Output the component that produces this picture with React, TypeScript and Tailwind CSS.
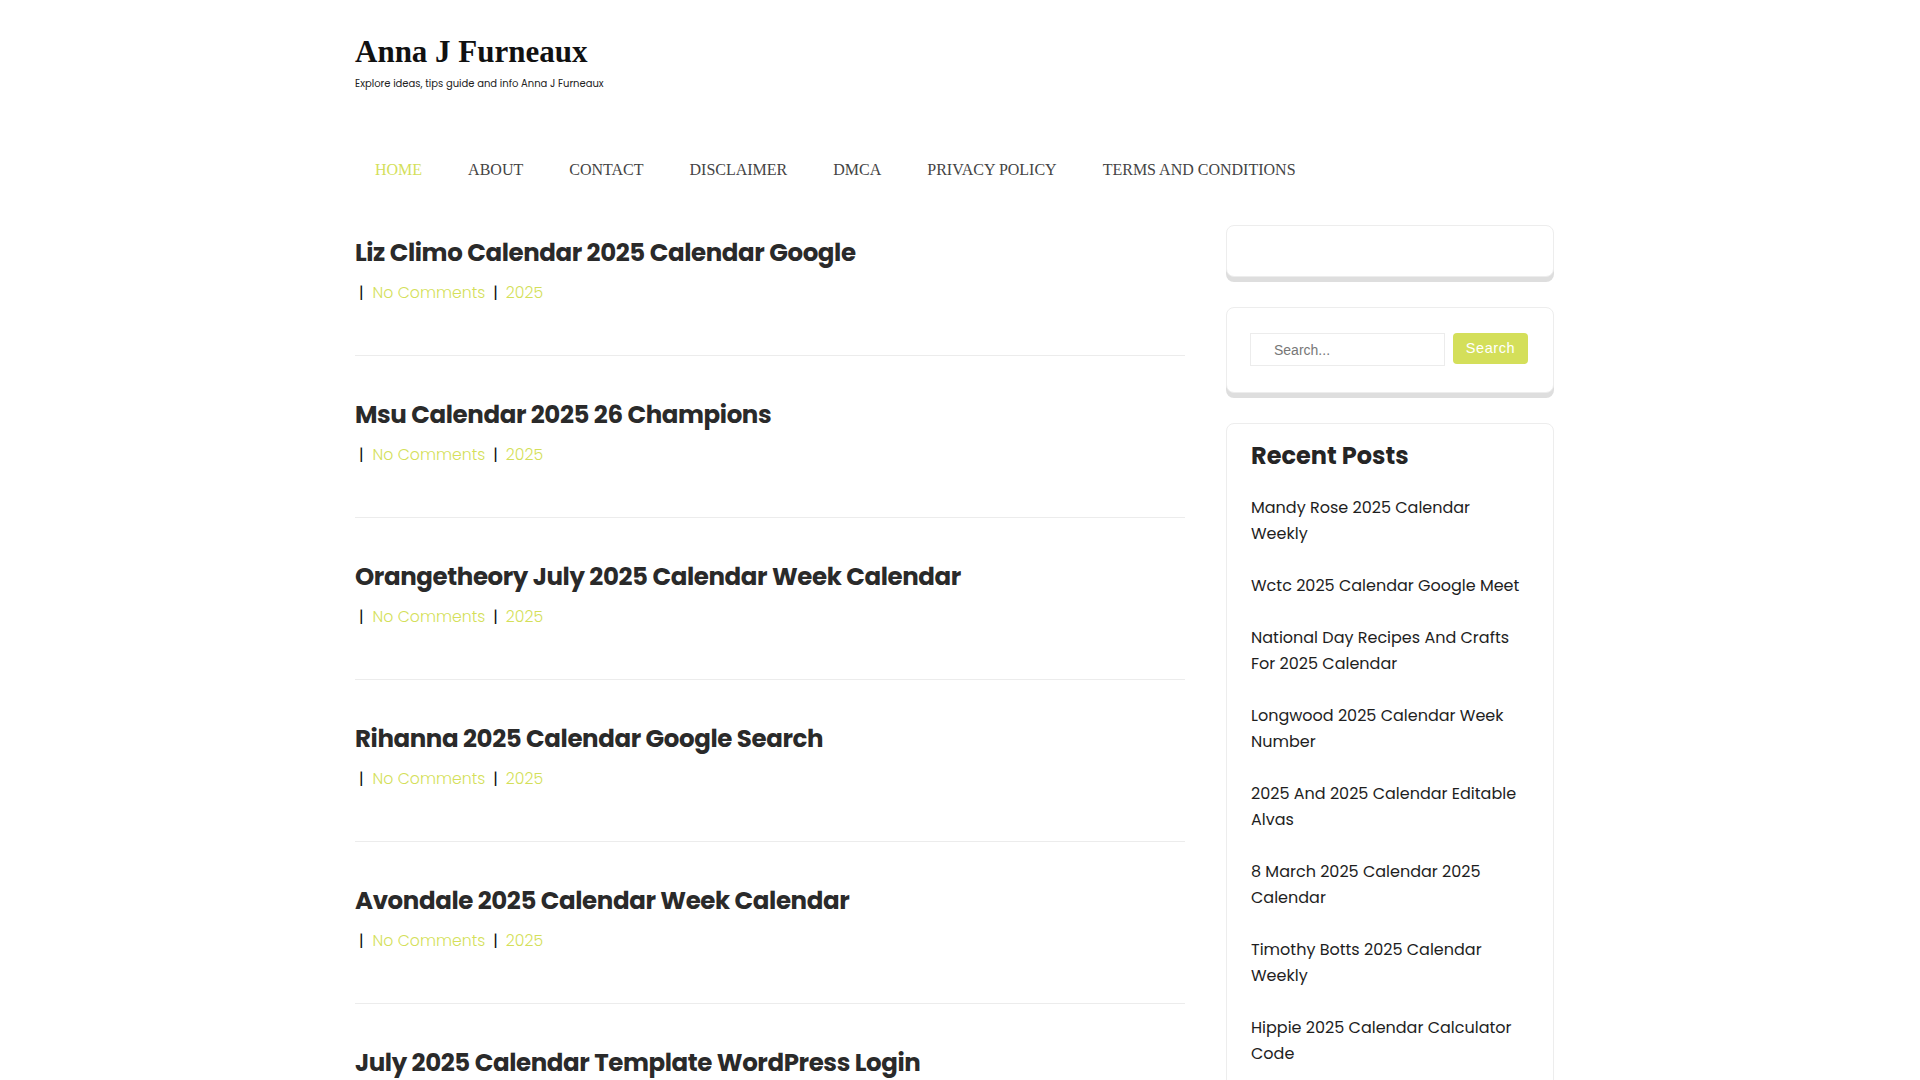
import React from "react";

const posts = [
  "Liz Climo Calendar 2025 Calendar Google",
  "Msu Calendar 2025 26 Champions",
  "Orangetheory July 2025 Calendar Week Calendar",
  "Rihanna 2025 Calendar Google Search",
  "Avondale 2025 Calendar Week Calendar",
  "July 2025 Calendar Template WordPress Login",
];

const recent: string[][] = [
  ["Mandy Rose 2025 Calendar", "Weekly"],
  ["Wctc 2025 Calendar Google Meet"],
  ["National Day Recipes And Crafts", "For 2025 Calendar"],
  ["Longwood 2025 Calendar Week", "Number"],
  ["2025 And 2025 Calendar Editable", "Alvas"],
  ["8 March 2025 Calendar 2025", "Calendar"],
  ["Timothy Botts 2025 Calendar", "Weekly"],
  ["Hippie 2025 Calendar Calculator", "Code"],
];

const nav = [
  "HOME",
  "ABOUT",
  "CONTACT",
  "DISCLAIMER",
  "DMCA",
  "PRIVACY POLICY",
  "TERMS AND CONDITIONS",
];

const sans = "font-['Poppins','Inter',sans-serif]";

function Widget({ children, className = "" }: { children?: React.ReactNode; className?: string }) {
  return (
    <div
      className={`rounded-[8px] border border-[#ededed] bg-white shadow-[0_5px_0_#dedede] ${className}`}
    >
      {children}
    </div>
  );
}

export default function App() {
  return (
    <div className={`min-h-screen bg-white pr-[10px] text-[#222] ${sans}`}>
      <div className="mx-auto w-[1200px]">
        <header className="pt-[33px]">
          <h1 className="font-['Liberation_Serif',serif] text-[31px] font-bold leading-[38px] text-[#111]">
            Anna J Furneaux
          </h1>
          <p className="mt-[5px] text-[10px] leading-[16px] text-[#222]">
            Explore ideas, tips guide and info Anna J Furneaux
          </p>
        </header>

        <nav className="-ml-[3px] mt-[66px] flex font-['Liberation_Serif',serif] text-[16px] leading-[24px]">
          {nav.map((item, i) => (
            <a
              key={item}
              href="#"
              className={`px-[23px] ${i === 0 ? "text-[#d4df5a]" : "text-[#444]"}`}
            >
              {item}
            </a>
          ))}
        </nav>

        <div className="mt-[43px] flex gap-[41px]">
          <main className="w-[830px] pt-[10px]">
            {posts.map((title, i) => (
              <article
                key={title}
                className={`border-b border-[#ececec] pb-[50px] ${i === 0 ? "" : "pt-[41px]"}`}
              >
                <h2 className="text-[24.5px] font-bold leading-[36px] tracking-[-0.4px] text-[#2a2a2a]">
                  {title}
                </h2>
                <div className="mt-[10px] flex items-center text-[15.7px] font-light leading-[24px]">
                  <span className="ml-[4px] font-normal text-[#111]">|</span>
                  <a href="#" className="ml-[9px] text-[#d4df5a]">
                    No Comments
                  </a>
                  <span className="ml-[8px] font-normal text-[#111]">|</span>
                  <a href="#" className="ml-[8px] text-[#d4df5a]">
                    2025
                  </a>
                </div>
              </article>
            ))}
          </main>

          <aside className="w-[328px]">
            <Widget className="h-[52px]" />

            <Widget className="mt-[30px] px-[23px] pb-[26px] pt-[25px]">
              <form className="flex gap-[8px]" onSubmit={(e) => e.preventDefault()}>
                <input
                  type="text"
                  placeholder="Search..."
                  className="h-[33px] w-[195px] border border-[#ececec] pl-[23px] font-['Liberation_Sans',sans-serif] text-[14px] text-[#555] outline-none placeholder:text-[#777]"
                />
                <button
                  type="submit"
                  className="h-[31px] w-[75px] rounded-[4px] bg-[#d4df5a] font-['Liberation_Sans',sans-serif] text-[14.5px] tracking-[0.6px] text-white"
                >
                  Search
                </button>
              </form>
            </Widget>

            <Widget className="mt-[30px] px-[24px] pb-[30px] pt-[16px]">
              <h3 className="text-[24px] font-bold leading-[32px] text-[#252525]">
                Recent Posts
              </h3>
              <ul className="mt-[23px] flex flex-col gap-[26px] text-[16px] leading-[26px]">
                {recent.map((lines) => (
                  <li key={lines.join(" ")}>
                    <a href="#" className="text-[#1e1e1e]">
                      {lines.map((l, j) => (
                        <span key={j} className="block">
                          {l}
                        </span>
                      ))}
                    </a>
                  </li>
                ))}
              </ul>
            </Widget>
          </aside>
        </div>
      </div>
    </div>
  );
}
